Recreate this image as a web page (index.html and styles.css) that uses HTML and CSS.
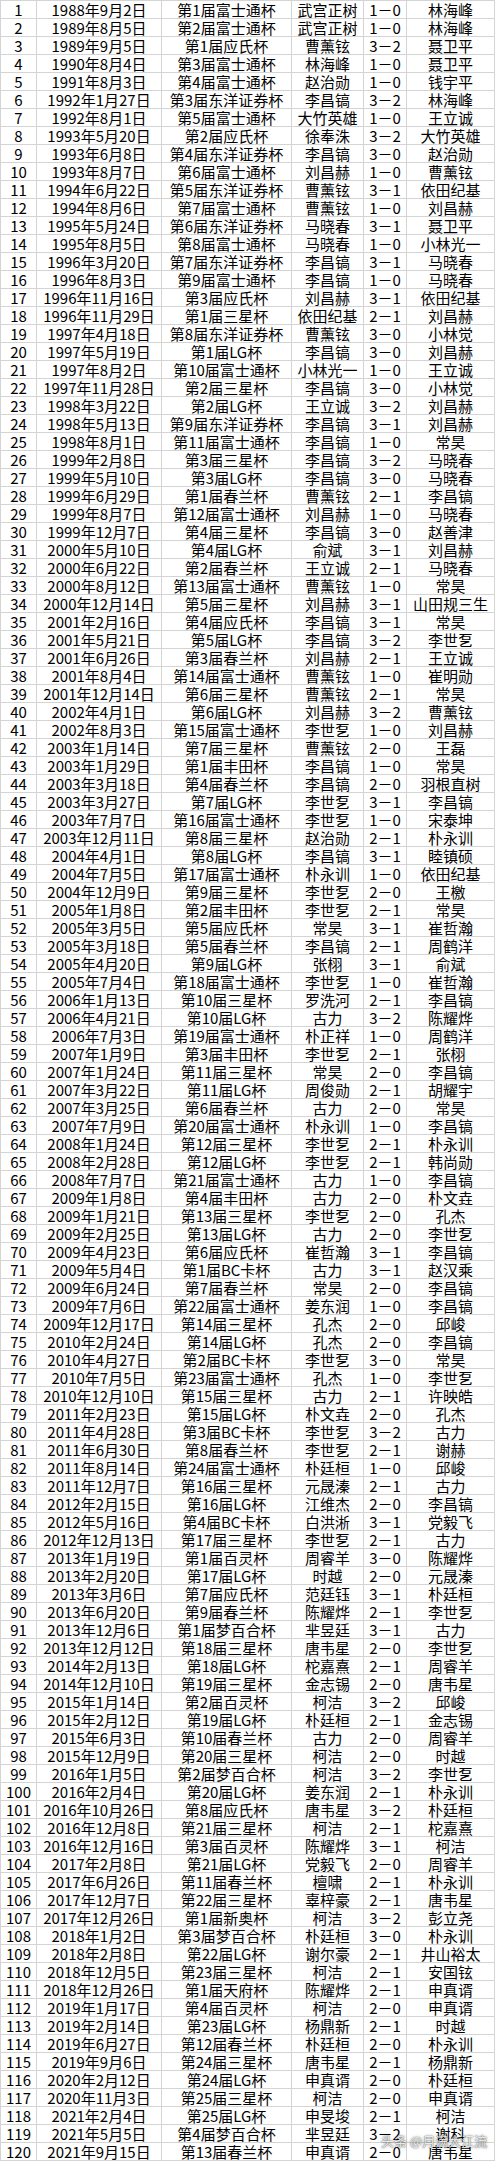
FILE: index.html
```html
<!DOCTYPE html>
<html lang="zh-CN">
<head>
<meta charset="utf-8">
<title>世界围棋大赛冠军</title>
<link rel="stylesheet" href="styles.css">
</head>
<body>
<div class="sheet">
<div class="row"><span>1</span><span>1988年9月2日</span><span>第1届富士通杯</span><span>武宫正树</span><span>1－0</span><span>林海峰</span></div>
<div class="row"><span>2</span><span>1989年8月5日</span><span>第2届富士通杯</span><span>武宫正树</span><span>1－0</span><span>林海峰</span></div>
<div class="row"><span>3</span><span>1989年9月5日</span><span>第1届应氏杯</span><span>曹薰铉</span><span>3－2</span><span>聂卫平</span></div>
<div class="row"><span>4</span><span>1990年8月4日</span><span>第3届富士通杯</span><span>林海峰</span><span>1－0</span><span>聂卫平</span></div>
<div class="row"><span>5</span><span>1991年8月3日</span><span>第4届富士通杯</span><span>赵治勋</span><span>1－0</span><span>钱宇平</span></div>
<div class="row"><span>6</span><span>1992年1月27日</span><span>第3届东洋证券杯</span><span>李昌镐</span><span>3－2</span><span>林海峰</span></div>
<div class="row"><span>7</span><span>1992年8月1日</span><span>第5届富士通杯</span><span>大竹英雄</span><span>1－0</span><span>王立诚</span></div>
<div class="row"><span>8</span><span>1993年5月20日</span><span>第2届应氏杯</span><span>徐奉洙</span><span>3－2</span><span>大竹英雄</span></div>
<div class="row"><span>9</span><span>1993年6月8日</span><span>第4届东洋证券杯</span><span>李昌镐</span><span>3－0</span><span>赵治勋</span></div>
<div class="row"><span>10</span><span>1993年8月7日</span><span>第6届富士通杯</span><span>刘昌赫</span><span>1－0</span><span>曹薰铉</span></div>
<div class="row"><span>11</span><span>1994年6月22日</span><span>第5届东洋证券杯</span><span>曹薰铉</span><span>3－1</span><span>依田纪基</span></div>
<div class="row"><span>12</span><span>1994年8月6日</span><span>第7届富士通杯</span><span>曹薰铉</span><span>1－0</span><span>刘昌赫</span></div>
<div class="row"><span>13</span><span>1995年5月24日</span><span>第6届东洋证券杯</span><span>马晓春</span><span>3－1</span><span>聂卫平</span></div>
<div class="row"><span>14</span><span>1995年8月5日</span><span>第8届富士通杯</span><span>马晓春</span><span>1－0</span><span>小林光一</span></div>
<div class="row"><span>15</span><span>1996年3月20日</span><span>第7届东洋证券杯</span><span>李昌镐</span><span>3－1</span><span>马晓春</span></div>
<div class="row"><span>16</span><span>1996年8月3日</span><span>第9届富士通杯</span><span>李昌镐</span><span>1－0</span><span>马晓春</span></div>
<div class="row"><span>17</span><span>1996年11月16日</span><span>第3届应氏杯</span><span>刘昌赫</span><span>3－1</span><span>依田纪基</span></div>
<div class="row"><span>18</span><span>1996年11月29日</span><span>第1届三星杯</span><span>依田纪基</span><span>2－1</span><span>刘昌赫</span></div>
<div class="row"><span>19</span><span>1997年4月18日</span><span>第8届东洋证券杯</span><span>曹薰铉</span><span>3－0</span><span>小林觉</span></div>
<div class="row"><span>20</span><span>1997年5月19日</span><span>第1届LG杯</span><span>李昌镐</span><span>3－0</span><span>刘昌赫</span></div>
<div class="row"><span>21</span><span>1997年8月2日</span><span>第10届富士通杯</span><span>小林光一</span><span>1－0</span><span>王立诚</span></div>
<div class="row"><span>22</span><span>1997年11月28日</span><span>第2届三星杯</span><span>李昌镐</span><span>3－0</span><span>小林觉</span></div>
<div class="row"><span>23</span><span>1998年3月22日</span><span>第2届LG杯</span><span>王立诚</span><span>3－2</span><span>刘昌赫</span></div>
<div class="row"><span>24</span><span>1998年5月13日</span><span>第9届东洋证券杯</span><span>李昌镐</span><span>3－1</span><span>刘昌赫</span></div>
<div class="row"><span>25</span><span>1998年8月1日</span><span>第11届富士通杯</span><span>李昌镐</span><span>1－0</span><span>常昊</span></div>
<div class="row"><span>26</span><span>1999年2月8日</span><span>第3届三星杯</span><span>李昌镐</span><span>3－2</span><span>马晓春</span></div>
<div class="row"><span>27</span><span>1999年5月10日</span><span>第3届LG杯</span><span>李昌镐</span><span>3－0</span><span>马晓春</span></div>
<div class="row"><span>28</span><span>1999年6月29日</span><span>第1届春兰杯</span><span>曹薰铉</span><span>2－1</span><span>李昌镐</span></div>
<div class="row"><span>29</span><span>1999年8月7日</span><span>第12届富士通杯</span><span>刘昌赫</span><span>1－0</span><span>马晓春</span></div>
<div class="row"><span>30</span><span>1999年12月7日</span><span>第4届三星杯</span><span>李昌镐</span><span>3－0</span><span>赵善津</span></div>
<div class="row"><span>31</span><span>2000年5月10日</span><span>第4届LG杯</span><span>俞斌</span><span>3－1</span><span>刘昌赫</span></div>
<div class="row"><span>32</span><span>2000年6月22日</span><span>第2届春兰杯</span><span>王立诚</span><span>2－1</span><span>马晓春</span></div>
<div class="row"><span>33</span><span>2000年8月12日</span><span>第13届富士通杯</span><span>曹薰铉</span><span>1－0</span><span>常昊</span></div>
<div class="row"><span>34</span><span>2000年12月14日</span><span>第5届三星杯</span><span>刘昌赫</span><span>3－1</span><span>山田规三生</span></div>
<div class="row"><span>35</span><span>2001年2月16日</span><span>第4届应氏杯</span><span>李昌镐</span><span>3－1</span><span>常昊</span></div>
<div class="row"><span>36</span><span>2001年5月21日</span><span>第5届LG杯</span><span>李昌镐</span><span>3－2</span><span>李世乭</span></div>
<div class="row"><span>37</span><span>2001年6月26日</span><span>第3届春兰杯</span><span>刘昌赫</span><span>2－1</span><span>王立诚</span></div>
<div class="row"><span>38</span><span>2001年8月4日</span><span>第14届富士通杯</span><span>曹薰铉</span><span>1－0</span><span>崔明勋</span></div>
<div class="row"><span>39</span><span>2001年12月14日</span><span>第6届三星杯</span><span>曹薰铉</span><span>2－1</span><span>常昊</span></div>
<div class="row"><span>40</span><span>2002年4月1日</span><span>第6届LG杯</span><span>刘昌赫</span><span>3－2</span><span>曹薰铉</span></div>
<div class="row"><span>41</span><span>2002年8月3日</span><span>第15届富士通杯</span><span>李世乭</span><span>1－0</span><span>刘昌赫</span></div>
<div class="row"><span>42</span><span>2003年1月14日</span><span>第7届三星杯</span><span>曹薰铉</span><span>2－0</span><span>王磊</span></div>
<div class="row"><span>43</span><span>2003年1月29日</span><span>第1届丰田杯</span><span>李昌镐</span><span>1－0</span><span>常昊</span></div>
<div class="row"><span>44</span><span>2003年3月18日</span><span>第4届春兰杯</span><span>李昌镐</span><span>2－0</span><span>羽根直树</span></div>
<div class="row"><span>45</span><span>2003年3月27日</span><span>第7届LG杯</span><span>李世乭</span><span>3－1</span><span>李昌镐</span></div>
<div class="row"><span>46</span><span>2003年7月7日</span><span>第16届富士通杯</span><span>李世乭</span><span>1－0</span><span>宋泰坤</span></div>
<div class="row"><span>47</span><span>2003年12月11日</span><span>第8届三星杯</span><span>赵治勋</span><span>2－1</span><span>朴永训</span></div>
<div class="row"><span>48</span><span>2004年4月1日</span><span>第8届LG杯</span><span>李昌镐</span><span>3－1</span><span>睦镇硕</span></div>
<div class="row"><span>49</span><span>2004年7月5日</span><span>第17届富士通杯</span><span>朴永训</span><span>1－0</span><span>依田纪基</span></div>
<div class="row"><span>50</span><span>2004年12月9日</span><span>第9届三星杯</span><span>李世乭</span><span>2－0</span><span>王檄</span></div>
<div class="row"><span>51</span><span>2005年1月8日</span><span>第2届丰田杯</span><span>李世乭</span><span>2－1</span><span>常昊</span></div>
<div class="row"><span>52</span><span>2005年3月5日</span><span>第5届应氏杯</span><span>常昊</span><span>3－1</span><span>崔哲瀚</span></div>
<div class="row"><span>53</span><span>2005年3月18日</span><span>第5届春兰杯</span><span>李昌镐</span><span>2－1</span><span>周鹤洋</span></div>
<div class="row"><span>54</span><span>2005年4月20日</span><span>第9届LG杯</span><span>张栩</span><span>3－1</span><span>俞斌</span></div>
<div class="row"><span>55</span><span>2005年7月4日</span><span>第18届富士通杯</span><span>李世乭</span><span>1－0</span><span>崔哲瀚</span></div>
<div class="row"><span>56</span><span>2006年1月13日</span><span>第10届三星杯</span><span>罗洗河</span><span>2－1</span><span>李昌镐</span></div>
<div class="row"><span>57</span><span>2006年4月21日</span><span>第10届LG杯</span><span>古力</span><span>3－2</span><span>陈耀烨</span></div>
<div class="row"><span>58</span><span>2006年7月3日</span><span>第19届富士通杯</span><span>朴正祥</span><span>1－0</span><span>周鹤洋</span></div>
<div class="row"><span>59</span><span>2007年1月9日</span><span>第3届丰田杯</span><span>李世乭</span><span>2－1</span><span>张栩</span></div>
<div class="row"><span>60</span><span>2007年1月24日</span><span>第11届三星杯</span><span>常昊</span><span>2－0</span><span>李昌镐</span></div>
<div class="row"><span>61</span><span>2007年3月22日</span><span>第11届LG杯</span><span>周俊勋</span><span>2－1</span><span>胡耀宇</span></div>
<div class="row"><span>62</span><span>2007年3月25日</span><span>第6届春兰杯</span><span>古力</span><span>2－0</span><span>常昊</span></div>
<div class="row"><span>63</span><span>2007年7月9日</span><span>第20届富士通杯</span><span>朴永训</span><span>1－0</span><span>李昌镐</span></div>
<div class="row"><span>64</span><span>2008年1月24日</span><span>第12届三星杯</span><span>李世乭</span><span>2－1</span><span>朴永训</span></div>
<div class="row"><span>65</span><span>2008年2月28日</span><span>第12届LG杯</span><span>李世乭</span><span>2－1</span><span>韩尚勋</span></div>
<div class="row"><span>66</span><span>2008年7月7日</span><span>第21届富士通杯</span><span>古力</span><span>1－0</span><span>李昌镐</span></div>
<div class="row"><span>67</span><span>2009年1月8日</span><span>第4届丰田杯</span><span>古力</span><span>2－0</span><span>朴文垚</span></div>
<div class="row"><span>68</span><span>2009年1月21日</span><span>第13届三星杯</span><span>李世乭</span><span>2－0</span><span>孔杰</span></div>
<div class="row"><span>69</span><span>2009年2月25日</span><span>第13届LG杯</span><span>古力</span><span>2－0</span><span>李世乭</span></div>
<div class="row"><span>70</span><span>2009年4月23日</span><span>第6届应氏杯</span><span>崔哲瀚</span><span>3－1</span><span>李昌镐</span></div>
<div class="row"><span>71</span><span>2009年5月4日</span><span>第1届BC卡杯</span><span>古力</span><span>3－1</span><span>赵汉乘</span></div>
<div class="row"><span>72</span><span>2009年6月24日</span><span>第7届春兰杯</span><span>常昊</span><span>2－0</span><span>李昌镐</span></div>
<div class="row"><span>73</span><span>2009年7月6日</span><span>第22届富士通杯</span><span>姜东润</span><span>1－0</span><span>李昌镐</span></div>
<div class="row"><span>74</span><span>2009年12月17日</span><span>第14届三星杯</span><span>孔杰</span><span>2－0</span><span>邱峻</span></div>
<div class="row"><span>75</span><span>2010年2月24日</span><span>第14届LG杯</span><span>孔杰</span><span>2－0</span><span>李昌镐</span></div>
<div class="row"><span>76</span><span>2010年4月27日</span><span>第2届BC卡杯</span><span>李世乭</span><span>3－0</span><span>常昊</span></div>
<div class="row"><span>77</span><span>2010年7月5日</span><span>第23届富士通杯</span><span>孔杰</span><span>1－0</span><span>李世乭</span></div>
<div class="row"><span>78</span><span>2010年12月10日</span><span>第15届三星杯</span><span>古力</span><span>2－1</span><span>许映皓</span></div>
<div class="row"><span>79</span><span>2011年2月23日</span><span>第15届LG杯</span><span>朴文垚</span><span>2－0</span><span>孔杰</span></div>
<div class="row"><span>80</span><span>2011年4月28日</span><span>第3届BC卡杯</span><span>李世乭</span><span>3－2</span><span>古力</span></div>
<div class="row"><span>81</span><span>2011年6月30日</span><span>第8届春兰杯</span><span>李世乭</span><span>2－1</span><span>谢赫</span></div>
<div class="row"><span>82</span><span>2011年8月14日</span><span>第24届富士通杯</span><span>朴廷桓</span><span>1－0</span><span>邱峻</span></div>
<div class="row"><span>83</span><span>2011年12月7日</span><span>第16届三星杯</span><span>元晟溱</span><span>2－1</span><span>古力</span></div>
<div class="row"><span>84</span><span>2012年2月15日</span><span>第16届LG杯</span><span>江维杰</span><span>2－0</span><span>李昌镐</span></div>
<div class="row"><span>85</span><span>2012年5月16日</span><span>第4届BC卡杯</span><span>白洪淅</span><span>3－1</span><span>党毅飞</span></div>
<div class="row"><span>86</span><span>2012年12月13日</span><span>第17届三星杯</span><span>李世乭</span><span>2－1</span><span>古力</span></div>
<div class="row"><span>87</span><span>2013年1月19日</span><span>第1届百灵杯</span><span>周睿羊</span><span>3－0</span><span>陈耀烨</span></div>
<div class="row"><span>88</span><span>2013年2月20日</span><span>第17届LG杯</span><span>时越</span><span>2－0</span><span>元晟溱</span></div>
<div class="row"><span>89</span><span>2013年3月6日</span><span>第7届应氏杯</span><span>范廷钰</span><span>3－1</span><span>朴廷桓</span></div>
<div class="row"><span>90</span><span>2013年6月20日</span><span>第9届春兰杯</span><span>陈耀烨</span><span>2－1</span><span>李世乭</span></div>
<div class="row"><span>91</span><span>2013年12月6日</span><span>第1届梦百合杯</span><span>芈昱廷</span><span>3－1</span><span>古力</span></div>
<div class="row"><span>92</span><span>2013年12月12日</span><span>第18届三星杯</span><span>唐韦星</span><span>2－0</span><span>李世乭</span></div>
<div class="row"><span>93</span><span>2014年2月13日</span><span>第18届LG杯</span><span>柁嘉熹</span><span>2－1</span><span>周睿羊</span></div>
<div class="row"><span>94</span><span>2014年12月10日</span><span>第19届三星杯</span><span>金志锡</span><span>2－0</span><span>唐韦星</span></div>
<div class="row"><span>95</span><span>2015年1月14日</span><span>第2届百灵杯</span><span>柯洁</span><span>3－2</span><span>邱峻</span></div>
<div class="row"><span>96</span><span>2015年2月12日</span><span>第19届LG杯</span><span>朴廷桓</span><span>2－1</span><span>金志锡</span></div>
<div class="row"><span>97</span><span>2015年6月3日</span><span>第10届春兰杯</span><span>古力</span><span>2－0</span><span>周睿羊</span></div>
<div class="row"><span>98</span><span>2015年12月9日</span><span>第20届三星杯</span><span>柯洁</span><span>2－0</span><span>时越</span></div>
<div class="row"><span>99</span><span>2016年1月5日</span><span>第2届梦百合杯</span><span>柯洁</span><span>3－2</span><span>李世乭</span></div>
<div class="row"><span>100</span><span>2016年2月4日</span><span>第20届LG杯</span><span>姜东润</span><span>2－1</span><span>朴永训</span></div>
<div class="row"><span>101</span><span>2016年10月26日</span><span>第8届应氏杯</span><span>唐韦星</span><span>3－2</span><span>朴廷桓</span></div>
<div class="row"><span>102</span><span>2016年12月8日</span><span>第21届三星杯</span><span>柯洁</span><span>2－1</span><span>柁嘉熹</span></div>
<div class="row"><span>103</span><span>2016年12月16日</span><span>第3届百灵杯</span><span>陈耀烨</span><span>3－1</span><span>柯洁</span></div>
<div class="row"><span>104</span><span>2017年2月8日</span><span>第21届LG杯</span><span>党毅飞</span><span>2－0</span><span>周睿羊</span></div>
<div class="row"><span>105</span><span>2017年6月26日</span><span>第11届春兰杯</span><span>檀啸</span><span>2－1</span><span>朴永训</span></div>
<div class="row"><span>106</span><span>2017年12月7日</span><span>第22届三星杯</span><span>辜梓豪</span><span>2－1</span><span>唐韦星</span></div>
<div class="row"><span>107</span><span>2017年12月26日</span><span>第1届新奥杯</span><span>柯洁</span><span>3－2</span><span>彭立尧</span></div>
<div class="row"><span>108</span><span>2018年1月2日</span><span>第3届梦百合杯</span><span>朴廷桓</span><span>3－0</span><span>朴永训</span></div>
<div class="row"><span>109</span><span>2018年2月8日</span><span>第22届LG杯</span><span>谢尔豪</span><span>2－1</span><span>井山裕太</span></div>
<div class="row"><span>110</span><span>2018年12月5日</span><span>第23届三星杯</span><span>柯洁</span><span>2－1</span><span>安国铉</span></div>
<div class="row"><span>111</span><span>2018年12月26日</span><span>第1届天府杯</span><span>陈耀烨</span><span>2－1</span><span>申真谞</span></div>
<div class="row"><span>112</span><span>2019年1月17日</span><span>第4届百灵杯</span><span>柯洁</span><span>2－0</span><span>申真谞</span></div>
<div class="row"><span>113</span><span>2019年2月14日</span><span>第23届LG杯</span><span>杨鼎新</span><span>2－1</span><span>时越</span></div>
<div class="row"><span>114</span><span>2019年6月27日</span><span>第12届春兰杯</span><span>朴廷桓</span><span>2－0</span><span>朴永训</span></div>
<div class="row"><span>115</span><span>2019年9月6日</span><span>第24届三星杯</span><span>唐韦星</span><span>2－1</span><span>杨鼎新</span></div>
<div class="row"><span>116</span><span>2020年2月12日</span><span>第24届LG杯</span><span>申真谞</span><span>2－0</span><span>朴廷桓</span></div>
<div class="row"><span>117</span><span>2020年11月3日</span><span>第25届三星杯</span><span>柯洁</span><span>2－0</span><span>申真谞</span></div>
<div class="row"><span>118</span><span>2021年2月4日</span><span>第25届LG杯</span><span>申旻埈</span><span>2－1</span><span>柯洁</span></div>
<div class="row"><span>119</span><span>2021年5月5日</span><span>第4届梦百合杯</span><span>芈昱廷</span><span>3－2</span><span>谢科</span></div>
<div class="row"><span>120</span><span>2021年9月15日</span><span>第13届春兰杯</span><span>申真谞</span><span>2－0</span><span>唐韦星</span></div>
</div>
<div class="watermark">头条 @月满大江流</div>
</body>
</html>
```

FILE: styles.css
```css
html, body {
  margin: 0;
  padding: 0;
  background: #ffffff;
}

body {
  position: relative;
  width: 495px;
  font-family: "Noto Sans CJK SC", "Noto Sans", sans-serif;
  font-size: 15px;
  color: #000000;
}

.sheet {
  border-top: 1px solid #d4d4d4;
}

.row {
  display: grid;
  grid-template-columns: 36px 125px 130px 72px 43px 89px;
  height: 18px;
}

.row > span {
  box-sizing: border-box;
  height: 18px;
  border-left: 1px solid #d4d4d4;
  border-bottom: 1px solid #d4d4d4;
  padding-top: 1px;
  line-height: 16px;
  text-align: center;
  white-space: nowrap;
}

.row > span:last-child {
  border-right: 1px solid #d4d4d4;
}

.watermark {
  position: absolute;
  left: 381px;
  top: 2133px;
  font-size: 13px;
  line-height: 16px;
  color: rgba(255, 255, 255, 0.9);
  text-shadow: 0 0 1px rgba(0, 0, 0, 0.7), 0 0 3px rgba(0, 0, 0, 0.5);
  white-space: nowrap;
}
```
